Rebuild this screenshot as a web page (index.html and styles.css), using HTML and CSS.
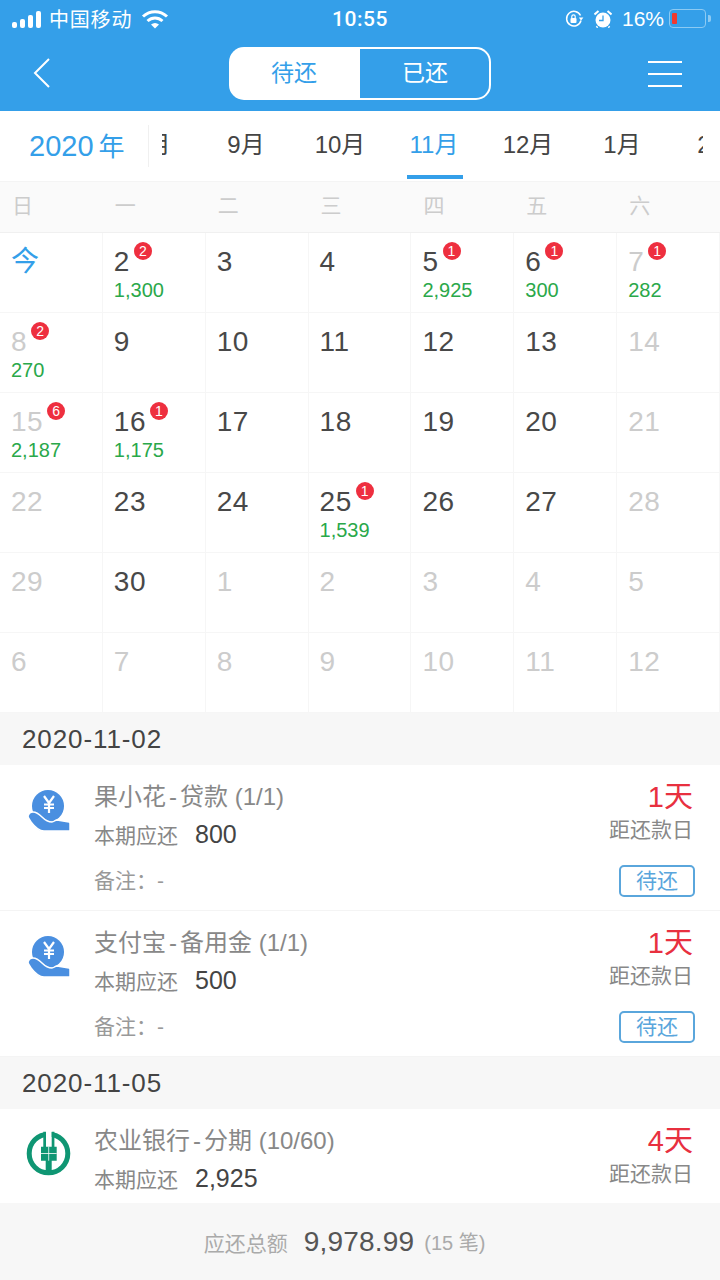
FILE: index.html
```html
<!DOCTYPE html>
<html>
<head lang="en">
    <meta charset="UTF-8">
    <title>还款日历</title>
    <link rel="stylesheet" href="styles.css">
</head>
<body>
<div id="page">
    <div id="header">
        <div id="status">
            <div class="status-left">
                <svg width="32" height="18" viewBox="0 0 32 18"><rect x="0" y="12" width="5" height="6" rx="2"/><rect x="8" y="9" width="5" height="9" rx="2"/><rect x="16" y="5" width="5" height="13" rx="2"/><rect x="24" y="1" width="5" height="17" rx="2"/></svg>
                <span class="carrier">中国移动</span>
                <svg class="wifi" width="28" height="20" viewBox="0 0 28 20"><path d="M2 7.500C9 1 19 1 26 7.500" fill="none" stroke="#fff" stroke-width="3"/><path d="M6.500 12C11 8 17 8 21.500 12" fill="none" stroke="#fff" stroke-width="3"/><path d="M10 15.500C12.500 13.500 15.500 13.500 18 15.500L14 19.500Z" fill="#fff"/></svg>
            </div>
            <div class="status-time">10:55</div>
            <div class="status-right">
                <svg width="19" height="18" viewBox="0 0 19 18"><path d="M15.500 5.500A7.300 7.300 0 1 0 16 10.500" fill="none" stroke="#fff" stroke-width="1.500"/><path d="M13.800 7.500h4.600l-2.300 3z" fill="#fff"/><rect x="5.500" y="8" width="6" height="5" rx="1" fill="#fff"/><path d="M6.800 8V6.500a1.700 1.700 0 0 1 3.400 0V8" fill="none" stroke="#fff" stroke-width="1.200"/></svg>
                <svg class="alarm" width="18" height="18" viewBox="0 0 18 18"><circle cx="9" cy="10" r="7.500" fill="#fff"/><path d="M9 5.500V10.500H5" fill="none" stroke="#349fe9" stroke-width="1.300"/><path d="M0.500 4.500L4.500 1M17.500 4.500L13.500 1M3.500 16.500L2.500 17.500M14.500 16.500L15.500 17.500" stroke="#fff" stroke-width="2"/></svg>
                <span class="percent">16%</span>
                <div class="battery"><div class="battery-level"></div></div>
                <div class="battery-cap"></div>
            </div>
        </div>
        <div id="nav">
            <svg class="back" width="20" height="32" viewBox="0 0 20 32"><path d="M17 2L3 16L17 30" fill="none" stroke="#fff" stroke-width="2"/></svg>
            <div class="switch">
                <span class="switch-on">待还</span>
                <span class="switch-off">已还</span>
            </div>
            <div class="menu"><i></i><i></i><i></i></div>
        </div>
    </div>

    <div id="months">
        <div class="year">2020<span>年</span></div>
        <div class="month-clip">
            <ul class="month-list">
                <li>8月</li>
                <li>9月</li>
                <li>10月</li>
                <li class="selected">11月</li>
                <li>12月</li>
                <li>1月</li>
                <li>2月</li>
            </ul>
        </div>
    </div>

    <ul id="week">
        <li>日</li><li>一</li><li>二</li><li>三</li><li>四</li><li>五</li><li>六</li>
    </ul>

    <div id="calendar">
        <div class="day today"><span class="num">今</span></div>
        <div class="day"><span class="num">2<b>2</b></span><em>1,300</em></div>
        <div class="day"><span class="num">3</span></div>
        <div class="day"><span class="num">4</span></div>
        <div class="day"><span class="num">5<b>1</b></span><em>2,925</em></div>
        <div class="day"><span class="num">6<b>1</b></span><em>300</em></div>
        <div class="day off"><span class="num">7<b>1</b></span><em>282</em></div>

        <div class="day off"><span class="num">8<b>2</b></span><em>270</em></div>
        <div class="day"><span class="num">9</span></div>
        <div class="day"><span class="num">10</span></div>
        <div class="day"><span class="num">11</span></div>
        <div class="day"><span class="num">12</span></div>
        <div class="day"><span class="num">13</span></div>
        <div class="day off"><span class="num">14</span></div>

        <div class="day off"><span class="num">15<b>6</b></span><em>2,187</em></div>
        <div class="day"><span class="num">16<b>1</b></span><em>1,175</em></div>
        <div class="day"><span class="num">17</span></div>
        <div class="day"><span class="num">18</span></div>
        <div class="day"><span class="num">19</span></div>
        <div class="day"><span class="num">20</span></div>
        <div class="day off"><span class="num">21</span></div>

        <div class="day off"><span class="num">22</span></div>
        <div class="day"><span class="num">23</span></div>
        <div class="day"><span class="num">24</span></div>
        <div class="day"><span class="num">25<b>1</b></span><em>1,539</em></div>
        <div class="day"><span class="num">26</span></div>
        <div class="day"><span class="num">27</span></div>
        <div class="day off"><span class="num">28</span></div>

        <div class="day off"><span class="num">29</span></div>
        <div class="day"><span class="num">30</span></div>
        <div class="day off"><span class="num">1</span></div>
        <div class="day off"><span class="num">2</span></div>
        <div class="day off"><span class="num">3</span></div>
        <div class="day off"><span class="num">4</span></div>
        <div class="day off"><span class="num">5</span></div>

        <div class="day off"><span class="num">6</span></div>
        <div class="day off"><span class="num">7</span></div>
        <div class="day off"><span class="num">8</span></div>
        <div class="day off"><span class="num">9</span></div>
        <div class="day off"><span class="num">10</span></div>
        <div class="day off"><span class="num">11</span></div>
        <div class="day off"><span class="num">12</span></div>
    </div>

    <div class="date-bar">2020-11-02</div>
    <div class="item">
        <svg class="logo" width="44" height="44" viewBox="0 0 44 44"><use href="#hand"/></svg>
        <div class="info">
            <div class="title">果小花<span class="dash">-</span>贷款 (1/1)</div>
            <div class="amount">本期应还<span>800</span></div>
            <div class="note">备注：-</div>
        </div>
        <div class="side">
            <div class="days">1天</div>
            <div class="days-label">距还款日</div>
            <div class="state">待还</div>
        </div>
    </div>
    <div class="item">
        <svg class="logo" width="44" height="44" viewBox="0 0 44 44"><use href="#hand"/></svg>
        <div class="info">
            <div class="title">支付宝<span class="dash">-</span>备用金 (1/1)</div>
            <div class="amount">本期应还<span>500</span></div>
            <div class="note">备注：-</div>
        </div>
        <div class="side">
            <div class="days">1天</div>
            <div class="days-label">距还款日</div>
            <div class="state">待还</div>
        </div>
    </div>
    <div class="date-bar">2020-11-05</div>
    <div class="item">
        <svg class="logo logo-bank" width="48" height="48" viewBox="0 0 48 48">
            <circle cx="22.500" cy="23.500" r="19.300" fill="none" stroke="#0f9673" stroke-width="5"/>
            <rect x="19.700" y="0" width="6" height="17" fill="#fff"/>
            <path d="M17.300 1.800h2.700V16.700h5.700V1.800h2.700V16.700h2.300V30.700h-5V41h-6V30.700H15V16.700h2.300z" fill="#0f9673"/>
            <path d="M15 23.500H30.700M22.700 16.700V30.700" stroke="#fff" stroke-width="0.800"/>
        </svg>
        <div class="info">
            <div class="title">农业银行<span class="dash">-</span>分期 (10/60)</div>
            <div class="amount">本期应还<span>2,925</span></div>
            <div class="note">备注：-</div>
        </div>
        <div class="side">
            <div class="days">4天</div>
            <div class="days-label">距还款日</div>
            <div class="state">待还</div>
        </div>
    </div>

    <div id="total">
        <span class="total-label">应还总额</span>
        <span class="total-num">9,978.99</span>
        <span class="total-count">(15 笔)</span>
    </div>
</div>

<svg width="0" height="0" class="defs">
    <defs>
        <g id="hand">
            <circle cx="20" cy="17" r="16" fill="#4a8fe0"/>
            <path d="M0 27C1 24 3 23 5 23C8 23 11 25 14 28C17 31 20 33 24 33C26 33 27 31 29 31L41 33Q42 33 42 35V41Q42 42 41 42H16C10 42 6 37 3 33C2 31 0 29 0 27Z" fill="#4a8fe0" stroke="#fff" stroke-width="1.500"/>
            <path d="M16 7L21 14L26 7M21 14V24M16 15.500H26M16 19H26" fill="none" stroke="#fff" stroke-width="2.200"/>
        </g>
    </defs>
</svg>
</body>
</html>
```

FILE: styles.css
```css
* {
    margin: 0;
    padding: 0;
    box-sizing: border-box;
}

ul {
    list-style: none;
}

html, body {
    height: 1280px;
    overflow: hidden;
}

body {
    background: #fff;
    font-family: "Liberation Sans", "Noto Sans CJK SC", sans-serif;
    color: #444;
}

.defs {
    display: block;
    height: 0;
}

#page {
    position: relative;
    width: 720px;
    height: 1280px;
    overflow: hidden;
}

/* 顶部蓝色区域 */
#header {
    height: 111px;
    background: #349fe9;
    color: #fff;
}

#status {
    height: 37px;
    padding: 0 9px 0 12px;
    display: flex;
    align-items: center;
    justify-content: space-between;
    font-size: 20px;
}

.status-left, .status-right {
    width: 260px;
    display: flex;
    align-items: center;
}

.status-left svg {
    fill: #fff;
}

.status-right {
    justify-content: flex-end;
}

.carrier {
    margin-left: 5px;
    letter-spacing: 0.800px;
}

.wifi {
    margin-left: 9px;
}

.status-time {
    font-family: Roboto, sans-serif;
    font-weight: 500;
    font-size: 21px;
    letter-spacing: 0.500px;
    margin-right: 3px;
}

.alarm {
    margin-left: 10px;
}

.percent {
    margin-left: 10px;
    font-size: 21px;
}

.battery {
    width: 37px;
    height: 19px;
    margin-left: 5px;
    padding: 3px 2px;
    border: 1.500px solid #8ccaf3;
    border-radius: 4px;
}

.battery-level {
    width: 5px;
    height: 100%;
    background: #f0392f;
    border-radius: 1px;
}

.battery-cap {
    width: 3px;
    height: 7px;
    margin-left: 2px;
    background: #8ccaf3;
    border-radius: 0 2px 2px 0;
}

#nav {
    height: 74px;
    padding: 10px 38px 0 32px;
    display: flex;
    align-items: flex-start;
    justify-content: space-between;
}

.back {
    margin-top: 10px;
}

.switch {
    width: 262px;
    height: 53px;
    margin-left: 19px;
    display: flex;
    font-size: 23px;
}

.switch span {
    flex: 0 0 131px;
    text-align: center;
    line-height: 53px;
}

.switch-on {
    background: #fff;
    color: #349fe9;
    border-radius: 15px 0 0 15px;
}

.switch span.switch-off {
    padding-left: 2px;
    border: 2px solid #fff;
    border-left: 0;
    border-radius: 0 15px 15px 0;
    line-height: 49px;
}

.menu {
    width: 34px;
    margin-top: 14px;
}

.menu i {
    display: block;
    height: 2px;
    margin-bottom: 10px;
    background: #fff;
}

/* 月份 */
#months {
    height: 70px;
    display: flex;
    align-items: center;
}

.year {
    width: 149px;
    height: 42px;
    line-height: 42px;
    padding-left: 29px;
    border-right: 1px solid #f0f0f0;
    font-size: 29px;
    color: #349fe9;
    white-space: nowrap;
}

.year span {
    margin-left: 5px;
    font-size: 26px;
}

.month-clip {
    width: 541px;
    height: 70px;
    margin-left: 13px;
    overflow: hidden;
}

.month-list {
    width: 700px;
    margin-left: -57px;
    display: flex;
}

.month-list li {
    flex: none;
    position: relative;
    width: 94px;
    height: 70px;
    line-height: 68px;
    text-align: center;
    font-size: 24px;
}

.month-list li.selected {
    color: #349fe9;
}

.month-list li.selected:after {
    content: "";
    position: absolute;
    left: 20px;
    bottom: 2px;
    width: 56px;
    height: 4px;
    background: #349fe9;
}

/* 星期 */
#week {
    height: 52px;
    display: grid;
    grid-template-columns: repeat(7, 1fr);
    background: #fafafa;
    border-top: 1px solid #f4f4f4;
    border-bottom: 1px solid #f0f0f0;
    font-size: 21px;
    line-height: 48px;
    color: #ccc;
}

#week li {
    padding-left: 12px;
}

/* 日历 */
#calendar {
    display: grid;
    grid-template-columns: repeat(7, 1fr);
    grid-auto-rows: 80px;
}

.day {
    padding: 11px 0 0 11px;
    border-right: 1px solid #f6f6f6;
    border-bottom: 1px solid #f6f6f6;
}

.num {
    display: inline-block;
    position: relative;
    height: 36px;
    line-height: 36px;
    font-size: 28px;
    letter-spacing: 0.500px;
    color: #484848;
}

.num b {
    position: absolute;
    left: 100%;
    top: -2px;
    width: 18px;
    height: 18px;
    margin-left: 4px;
    border-radius: 50%;
    background: #ee2f3f;
    color: #fff;
    font-size: 14px;
    font-weight: 400;
    line-height: 18px;
    letter-spacing: 0;
    text-align: center;
}

.day em {
    display: block;
    margin-top: -2px;
    font-style: normal;
    font-size: 20px;
    line-height: 24px;
    color: #2aa84a;
}

.off .num {
    color: #ccc;
}

.today .num {
    color: #349fe9;
}

/* 列表 */
.date-bar {
    height: 52px;
    padding-left: 22px;
    background: #f7f7f7;
    font-size: 26px;
    letter-spacing: 0.900px;
    line-height: 52px;
    color: #444;
}

.item {
    height: 146px;
    padding: 17px 25px 0 26px;
    display: flex;
    border-bottom: 1px solid #f4f4f4;
}

.logo {
    flex: none;
    margin: 7px 0 0 2px;
}

.logo-bank {
    margin: 4px -2px 0 0;
}

.info {
    flex: 1;
    margin-left: 22px;
}

.title {
    font-size: 24px;
    line-height: 30px;
    color: #888;
}

.dash {
    margin: 0 3px;
}

.amount {
    margin-top: 7px;
    font-size: 21px;
    line-height: 30px;
    color: #888;
}

.amount span {
    margin-left: 17px;
    font-size: 25px;
    color: #444;
}

.note {
    margin-top: 15px;
    font-size: 21px;
    line-height: 30px;
    color: #999;
}

.side {
    display: flex;
    flex-direction: column;
    align-items: flex-end;
}

.days {
    margin-right: 2px;
    font-size: 29px;
    line-height: 30px;
    color: #e8303f;
}

.days-label {
    margin: 3px 2px 0 0;
    font-size: 21px;
    line-height: 30px;
    color: #888;
}

.state {
    width: 76px;
    height: 32px;
    margin-top: 20px;
    border: 2px solid #5aa6dc;
    border-radius: 5px;
    font-size: 21px;
    line-height: 27px;
    text-align: center;
    color: #5aa6dc;
}

/* 底部合计 */
#total {
    position: absolute;
    left: 0;
    bottom: 0;
    width: 100%;
    height: 77px;
    padding-right: 31px;
    display: flex;
    align-items: center;
    justify-content: center;
    background: #f7f7f7;
    color: #aaa;
    font-size: 21px;
}

.total-num {
    margin: 0 10px 0 16px;
    font-size: 28px;
    letter-spacing: 0.200px;
    color: #555;
}

.total-count {
    font-size: 20px;
}
```
